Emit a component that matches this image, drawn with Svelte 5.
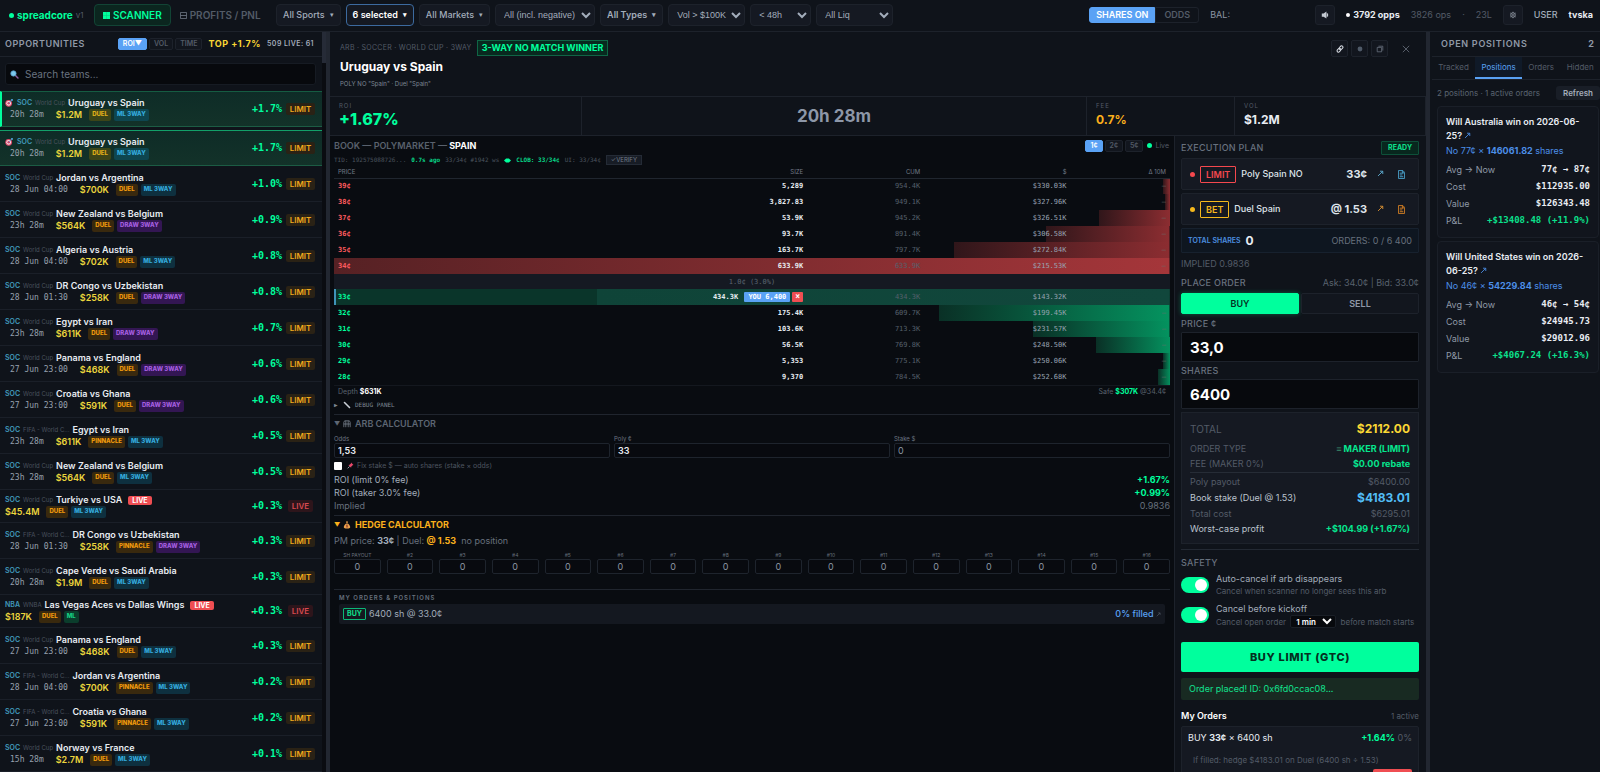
<script lang="ts">
    type Opp = {
        teams: string;
        league?: string;
        sport?: string;
        time?: string;
        vol: string;
        book?: string;
        market?: string;
        roi: string;
        hot?: boolean;
        active?: boolean;
        live?: boolean;
        down?: boolean;
    };

    const opps: Opp[] = [
        { teams: 'Uruguay vs Spain', time: '20h 28m', vol: '$1.2M', roi: '+1.7%', hot: true, active: true },
        { teams: 'Uruguay vs Spain', time: '20h 28m', vol: '$1.2M', roi: '+1.7%', hot: true },
        { teams: 'Jordan vs Argentina', time: '28 Jun 04:00', vol: '$700K', roi: '+1.0%' },
        { teams: 'New Zealand vs Belgium', time: '23h 28m', vol: '$564K', market: 'DRAW 3WAY', roi: '+0.9%' },
        { teams: 'Algeria vs Austria', time: '28 Jun 04:00', vol: '$702K', roi: '+0.8%' },
        { teams: 'DR Congo vs Uzbekistan', time: '28 Jun 01:30', vol: '$258K', market: 'DRAW 3WAY', roi: '+0.8%' },
        { teams: 'Egypt vs Iran', time: '23h 28m', vol: '$611K', market: 'DRAW 3WAY', roi: '+0.7%' },
        { teams: 'Panama vs England', time: '27 Jun 23:00', vol: '$468K', market: 'DRAW 3WAY', roi: '+0.6%' },
        { teams: 'Croatia vs Ghana', time: '27 Jun 23:00', vol: '$591K', market: 'DRAW 3WAY', roi: '+0.6%' },
        { teams: 'Egypt vs Iran', league: 'FIFA - World C...', time: '23h 28m', vol: '$611K', book: 'PINNACLE', roi: '+0.5%' },
        { teams: 'New Zealand vs Belgium', time: '23h 28m', vol: '$564K', roi: '+0.5%' },
        { teams: 'Turkiye vs USA', vol: '$45.4M', roi: '+0.3%', live: true },
        { teams: 'DR Congo vs Uzbekistan', league: 'FIFA - World C...', time: '28 Jun 01:30', vol: '$258K', book: 'PINNACLE', market: 'DRAW 3WAY', roi: '+0.3%' },
        { teams: 'Cape Verde vs Saudi Arabia', time: '20h 28m', vol: '$1.9M', roi: '+0.3%' },
        { teams: 'Las Vegas Aces vs Dallas Wings', sport: 'NBA', league: 'WNBA', vol: '$187K', market: 'ML', roi: '+0.3%', live: true, down: true },
        { teams: 'Panama vs England', time: '27 Jun 23:00', vol: '$468K', roi: '+0.3%' },
        { teams: 'Jordan vs Argentina', league: 'FIFA - World C...', time: '28 Jun 04:00', vol: '$700K', book: 'PINNACLE', roi: '+0.2%' },
        { teams: 'Croatia vs Ghana', league: 'FIFA - World C...', time: '27 Jun 23:00', vol: '$591K', book: 'PINNACLE', roi: '+0.2%' },
        { teams: 'Norway vs France', time: '15h 28m', vol: '$2.7M', roi: '+0.1%' },
    ];

    // size is in shares, the bar width is relative to the largest level
    const asks = [
        { price: 39, size: 5289, label: '5,289', cum: '954.4K', usd: '$330.03K' },
        { price: 38, size: 3827, label: '3,827.83', cum: '949.1K', usd: '$327.96K' },
        { price: 37, size: 53900, label: '53.9K', cum: '945.2K', usd: '$326.51K' },
        { price: 36, size: 93700, label: '93.7K', cum: '891.4K', usd: '$306.58K' },
        { price: 35, size: 163700, label: '163.7K', cum: '797.7K', usd: '$272.84K' },
        { price: 34, size: 633900, label: '633.9K', cum: '633.9K', usd: '$215.53K' },
    ];
    const bids = [
        { price: 33, size: 434300, label: '434.3K', cum: '434.3K', usd: '$143.32K', mine: '6,400' },
        { price: 32, size: 175400, label: '175.4K', cum: '609.7K', usd: '$199.45K' },
        { price: 31, size: 103600, label: '103.6K', cum: '713.3K', usd: '$231.57K' },
        { price: 30, size: 56500, label: '56.5K', cum: '769.8K', usd: '$248.50K' },
        { price: 29, size: 5353, label: '5,353', cum: '775.1K', usd: '$250.06K' },
        { price: 28, size: 9370, label: '9,370', cum: '784.5K', usd: '$252.68K' },
    ];
    const maxSize = Math.max(...asks.map(l => l.size), ...bids.map(l => l.size));
    const depth = (size: number) => (size / maxSize) * 100 + '%';

    const positions = [
        { title: 'Will Australia win on 2026-06-25?', price: '77¢', shares: '146061.82', now: '77¢ → 87¢', cost: '$112935.00', value: '$126343.48', pnl: '+$13408.48 (+11.9%)' },
        { title: 'Will United States win on 2026-06-25?', price: '46¢', shares: '54229.84', now: '46¢ → 54¢', cost: '$24945.73', value: '$29012.96', pnl: '+$4067.24 (+16.3%)' },
    ];

    const hedges = Array.from({ length: 16 }, (_, i) => (i === 0 ? 'SH PAYOUT' : '#' + (i + 1)));

    let sort = $state('ROI');
    let tick = $state('1¢');
    let side = $state('BUY');
    let tab = $state('Positions');
    let autoCancel = $state(true);
    let kickoffCancel = $state(true);
    let price = $state('33,0');
    let shares = $state('6400');
</script>

{#snippet arrow()}
    <svg class="arrow" viewBox="0 0 8 8" aria-hidden="true"><path d="M1.2 6.8 6.4 1.6M3.4 1.4h3.2v3.2" /></svg>
{/snippet}

<div class="app">
    <header class="topbar">
        <a class="brand" href="/"><i class="dot"></i>spreadcore <small>v1</small></a>
        <nav>
            <a class="nav on" href="#scanner">
                <svg viewBox="0 0 8 8"><rect width="8" height="8" fill="#00ff9d" /><path d="M0 4h8M4 0v8" stroke="#0bc97f" stroke-width=".6" /></svg>
                SCANNER
            </a>
            <a class="nav" href="#pnl">
                <svg viewBox="0 0 8 8"><path d="M.5.5h7v7h-7zM.5 4h7" fill="none" stroke="#6b7380" /></svg>
                PROFITS / PNL
            </a>
        </nav>
        <div class="filters">
            <button class="filter">All Sports <span>▾</span></button>
            <button class="filter chosen">6 selected <span>▾</span></button>
            <button class="filter">All Markets <span>▾</span></button>
            <select class="w-l" aria-label="Edge"><option>All (incl. negative)</option></select>
            <button class="filter strong">All Types <span>▾</span></button>
            <select class="w-m" aria-label="Volume"><option>Vol &gt; $100K</option></select>
            <select class="w-s" aria-label="Time"><option>&lt; 48h</option></select>
            <select class="w-m" aria-label="Liquidity"><option>All Liq</option></select>
        </div>
        <div class="account">
            <div class="units"><button class="on">SHARES ON</button><button>ODDS</button></div>
            <span class="bal">BAL:</span>
            <button class="icon" aria-label="Sound">
                <svg viewBox="0 0 10 10"><path d="M1 3.2h2.2L6.8.6v8.8L3.2 7.2H1zM7.3 2.4v5.2l1.6-1V3.4z" fill="#c4cad3" /></svg>
            </button>
            <b><i class="dot white"></i>3792 opps</b>
            <span class="dim">3826 ops</span>
            <span class="dim">·</span>
            <span class="dim">23L</span>
            <button class="icon" aria-label="Settings">
                <svg viewBox="0 0 10 10" fill="none" stroke="#a5adb9"><circle cx="5" cy="5" r="2.8" /><circle cx="5" cy="5" r=".6" /><path d="M5 1v1M5 8v1M1.8 2.6l.8.6M7.4 6.8l.8.6M8.2 2.6l-.8.6M2.6 6.8l-.8.6" /></svg>
            </button>
            <span class="user">USER</span>
            <b>tvska</b>
        </div>
    </header>

    <div class="columns">
        <aside class="opps">
            <div class="scroller">
                <div class="head">
                    <h2>OPPORTUNITIES</h2>
                    <div class="sorts">
                        <button class="chip" class:on={sort === 'ROI'} onclick={() => (sort = 'ROI')}>ROI▼</button>
                        <button class="chip" class:on={sort === 'VOL'} onclick={() => (sort = 'VOL')}>VOL</button>
                        <button class="chip" class:on={sort === 'TIME'} onclick={() => (sort = 'TIME')}>TIME</button>
                    </div>
                    <b class="top">TOP +1.7%</b>
                    <span class="count">509 LIVE: 61</span>
                </div>
                <label class="search">
                    <svg viewBox="0 0 12 12" aria-hidden="true"><path d="m7 7 3.6 3.6" stroke="#8d5fa0" stroke-width="2" stroke-linecap="round" /><circle cx="4.6" cy="4.6" r="3.6" fill="#7cc8ee" stroke="#4d8fb8" /></svg>
                    <input type="search" placeholder="Search teams..." aria-label="Search teams" />
                </label>
                <ul>
                    {#each opps as o}
                        <li class:hot={o.hot} class:active={o.active} class:live={o.live}>
                            <div class="info">
                                <div class="line">
                                    {#if o.hot}
                                        <svg class="target" viewBox="0 0 10 10"><circle cx="4.6" cy="5.4" r="4.2" fill="#e0496a" /><circle cx="4.6" cy="5.4" r="2.9" fill="#f3dfe6" /><circle cx="4.6" cy="5.4" r="1.6" fill="#d93b5f" /><path d="M4.6 5.4 8 2V.4l1.6.2-.2 1.2L8 2" stroke="#56a8e0" fill="#56a8e0" /></svg>
                                    {/if}
                                    <span class="sport">{o.sport ?? 'SOC'}</span>
                                    <span class="league">{o.league ?? 'World Cup'}</span>
                                    <b class="teams">{o.teams}</b>
                                    {#if o.live}<span class="livetag">LIVE</span>{/if}
                                </div>
                                <div class="line meta">
                                    {#if o.time}<span class="time">{o.time}</span>{/if}
                                    <b class="vol">{o.vol}</b>
                                    <span class="tags">
                                        <span class="tag maker">{o.book ?? 'DUEL'}</span>
                                        <span class="tag" class:draw={o.market === 'DRAW 3WAY'} class:ml={o.market === 'ML'}>{o.market ?? 'ML 3WAY'}</span>
                                    </span>
                                </div>
                            </div>
                            <span class="roi">{#if o.down}<i>▾</i>{/if}{o.roi}</span>
                            <span class="kind">{o.live ? 'LIVE' : 'LIMIT'}</span>
                        </li>
                    {/each}
                </ul>
            </div>
            <div class="track"></div>
        </aside>
        <div class="split"></div>

        <main>
            <section class="match">
                <div>
                    <div class="crumbs">ARB · SOCCER · WORLD CUP · 3WAY <span class="winner">3-WAY NO MATCH WINNER</span></div>
                    <h1>Uruguay vs Spain</h1>
                    <p>POLY NO "Spain" · Duel "Spain"</p>
                </div>
                <div class="tools">
                    <button aria-label="Copy link"><svg viewBox="0 0 10 10" fill="none" stroke="#d5dae1" stroke-width="1.3"><rect x="4.6" y=".8" width="3.4" height="5.4" rx="1.7" transform="rotate(40 6.3 3.5)" /><rect x="2" y="3.8" width="3.4" height="5.4" rx="1.7" transform="rotate(40 3.7 6.5)" /></svg></button>
                    <button aria-label="Track"><svg viewBox="0 0 10 10"><circle cx="5" cy="5" r="3" fill="#4f5a68" /></svg></button>
                    <button aria-label="Pop out"><svg viewBox="0 0 10 10" fill="none" stroke="#68717e"><path d="M3 1.5h5.5V7M1.5 3H7v5.5H1.5z" /></svg></button>
                    <button class="close" aria-label="Close"><svg viewBox="0 0 10 10" stroke="#68717e"><path d="m1 1 8 8M9 1 1 9" /></svg></button>
                </div>
            </section>

            <section class="stats">
                <div><small>ROI</small><b class="big">+1.67%</b></div>
                <div class="clock">20h 28m</div>
                <div><small>FEE</small><b class="fee">0.7%</b></div>
                <div><small>VOL</small><b>$1.2M</b></div>
            </section>

            <div class="work">
                <section class="book">
                    <div class="bookhead">
                        <h2>BOOK — POLYMARKET — <b>SPAIN</b></h2>
                        <div class="sorts">
                            {#each ['1¢', '2¢', '5¢'] as t}
                                <button class="chip" class:on={tick === t} onclick={() => (tick = t)}>{t}</button>
                            {/each}
                        </div>
                        <span class="feed"><i class="dot"></i>Live</span>
                    </div>
                    <div class="tid">
                        <span>TID: 192575088726...</span>
                        <b>0.7s ago</b>
                        <span>33/34¢ #1942 ws</span>
                        <svg viewBox="0 0 10 6"><path d="M0 3 3 0h4l3 3-3 3H3z" fill="#00ff9d" /></svg>
                        <b>CLOB: 33/34¢</b>
                        <span>UI: 33/34¢</span>
                        <button>✓VERIFY</button>
                    </div>
                    <table>
                        <thead>
                            <tr><th class="c-price">PRICE</th><th class="c-size">SIZE</th><th class="c-cum">CUM</th><th class="c-usd">$</th><th>Δ 10M</th></tr>
                        </thead>
                        <tbody>
                            {#each asks as l, i}
                                <tr class="ask" class:best={i === asks.length - 1} style:--depth={depth(l.size)}>
                                    <td>{l.price}¢</td><td>{l.label}</td><td>{l.cum}</td><td>{l.usd}</td><td>–</td>
                                </tr>
                            {/each}
                            <tr class="spread"><td colspan="5">1.0¢ (3.0%)</td></tr>
                            {#each bids as l}
                                <tr class="bid" class:own={l.mine} style:--depth={depth(l.size)}>
                                    <td>{l.price}¢</td>
                                    <td>
                                        {l.label}
                                        {#if l.mine}<span class="you">YOU {l.mine}</span><button class="kill" aria-label="Cancel order">×</button>{/if}
                                    </td>
                                    <td>{l.cum}</td><td>{l.usd}</td><td>{l.mine ? '' : '–'}</td>
                                </tr>
                            {/each}
                        </tbody>
                    </table>
                    <div class="depth"><span>Depth <b>$631K</b></span><span>Safe <b class="green">$307K</b> @34.4¢</span></div>
                    <details class="debug">
                        <summary>
                            <svg viewBox="0 0 8 8"><path d="m1.5 1.5 5 5" stroke="#c9ced6" stroke-width="1.6" stroke-linecap="round" /></svg>
                            DEBUG PANEL
                        </summary>
                    </details>

                    <details class="calc" open>
                        <summary>
                            <svg viewBox="0 0 10 10" fill="none" stroke="#77808d"><path d="M1 9V3l1-2h6l1 2v6M1 5h8M3.5 5v4M6.5 5v4M3.5 1v4M6.5 1v4" /></svg>
                            ARB CALCULATOR
                        </summary>
                        <div class="inputs">
                            <label>Odds<input value="1,53" /></label>
                            <label>Poly ¢<input value="33" /></label>
                            <label>Stake $<input placeholder="0" /></label>
                        </div>
                        <label class="fix">
                            <input type="checkbox" />
                            <svg viewBox="0 0 8 8"><path d="m4.6.6 2.8 2.8-1 .3-1.5 1.5-.2 1.4L1.6 3.5 3 3.2l1.5-1.6z" fill="#e8486b" /><path d="M3 5 .8 7.2" stroke="#aab1bc" /></svg>
                            Fix stake $ — auto shares (stake × odds)
                        </label>
                        <dl>
                            <div><dt>ROI (limit 0% fee)</dt><dd>+1.67%</dd></div>
                            <div><dt>ROI (taker 3.0% fee)</dt><dd>+0.99%</dd></div>
                            <div class="muted"><dt>Implied</dt><dd>0.9836</dd></div>
                        </dl>
                    </details>

                    <details class="calc hedge" open>
                        <summary>
                            <svg viewBox="0 0 10 10"><path d="M3.6.6h2.8l-.8 2h-1.2zM4 3h2c1.8 1.2 3 3 3 4.6 0 1.2-1 1.8-2 1.8H3c-1 0-2-.6-2-1.8C1 6 2.2 4.2 4 3z" fill="#e9a04c" /><path d="M5 4.5v3.6M4 5.4h1.6M4.2 7.2h1.8" stroke="#8a3b2c" /></svg>
                            HEDGE CALCULATOR
                        </summary>
                        <p>PM price: <b>33¢</b> | Duel: <b class="amber">@ 1.53</b>&nbsp; no position</p>
                        <div class="payouts">
                            {#each hedges as h}
                                <label>{h}<input placeholder="0" /></label>
                            {/each}
                        </div>
                    </details>

                    <div class="mine">
                        <h3>MY ORDERS &amp; POSITIONS</h3>
                        <div class="order">
                            <span class="buytag">BUY</span> 6400 sh @ 33.0¢
                            <a href="#order">0% filled {@render arrow()}</a>
                        </div>
                    </div>
                </section>

                <section class="exec">
                    <div class="row">
                        <h2>EXECUTION PLAN</h2>
                        <span class="ready">READY</span>
                    </div>
                    <div class="leg red">
                        <i class="dot"></i><span class="type">LIMIT</span>Poly Spain NO
                        <b>33¢</b>
                        <a href="#poly" aria-label="Open market">{@render arrow()}</a>
                        <button aria-label="Copy price"><svg viewBox="0 0 8 10"><path d="M.5.5h5l2 2v7h-7zM2 3.5h4M2 5.5h3M2 7.5h4M5 .5V3h2" /></svg></button>
                    </div>
                    <div class="leg gold">
                        <i class="dot"></i><span class="type">BET</span>Duel Spain
                        <b>@ 1.53</b>
                        <a href="#duel" aria-label="Open book">{@render arrow()}</a>
                        <button aria-label="Copy odds"><svg viewBox="0 0 8 10"><path d="M.5.5h5l2 2v7h-7zM2 3.5h4M2 5.5h3M2 7.5h4M5 .5V3h2" /></svg></button>
                    </div>
                    <div class="shares">
                        <span>TOTAL SHARES</span><b>0</b>
                        <em>ORDERS: 0 / 6 400</em>
                    </div>
                    <p class="implied">IMPLIED 0.9836</p>
                    <div class="row place">
                        <h2>PLACE ORDER</h2>
                        <span>Ask: 34.0¢ | Bid: 33.0¢</span>
                    </div>
                    <div class="sides">
                        <button class:on={side === 'BUY'} onclick={() => (side = 'BUY')}>BUY</button>
                        <button class:on={side === 'SELL'} onclick={() => (side = 'SELL')}>SELL</button>
                    </div>
                    <label class="field">PRICE ¢<input bind:value={price} /></label>
                    <label class="field">SHARES<input bind:value={shares} /></label>

                    <dl class="summary">
                        <div class="total"><dt>TOTAL</dt><dd>$2112.00</dd></div>
                        <div class="good"><dt>ORDER TYPE</dt><dd><i>≡</i> MAKER (LIMIT)</dd></div>
                        <div class="good"><dt>FEE (MAKER 0%)</dt><dd>$0.00 rebate</dd></div>
                        <hr />
                        <div><dt>Poly payout</dt><dd>$6400.00</dd></div>
                        <div class="stake"><dt>Book stake (Duel @ 1.53)</dt><dd>$4183.01</dd></div>
                        <div><dt>Total cost</dt><dd>$6295.01</dd></div>
                        <div class="good lit"><dt>Worst-case profit</dt><dd>+$104.99 (+1.67%)</dd></div>
                    </dl>

                    <div class="safety">
                        <h2>SAFETY</h2>
                        <div class="option">
                            <input id="auto" type="checkbox" bind:checked={autoCancel} />
                            <label for="auto">Auto-cancel if arb disappears<small>Cancel when scanner no longer sees this arb</small></label>
                        </div>
                        <div class="option">
                            <input id="kickoff" type="checkbox" bind:checked={kickoffCancel} />
                            <div>
                                <label for="kickoff">Cancel before kickoff</label>
                                <small>Cancel open order <select aria-label="Minutes before kickoff"><option>1 min</option></select> before match starts</small>
                            </div>
                        </div>
                    </div>
                    <button class="submit">BUY LIMIT (GTC)</button>
                    <div class="placed">Order placed! ID: 0x6fd0ccac08...</div>
                    <div class="row orders"><b>My Orders</b><span>1 active</span></div>
                    <div class="open">
                        <div class="row"><span>BUY <b>33¢</b> × 6400 sh</span><span><b class="green">+1.64%</b> <i>0%</i></span></div>
                        <p>If filled: hedge $4183.01 on Duel (6400 sh ÷ 1.53)</p>
                        <button aria-label="Cancel order"></button>
                    </div>
                </section>
            </div>
        </main>
        <div class="split"></div>

        <aside class="positions">
            <div class="head"><h2>OPEN POSITIONS</h2><b>2</b></div>
            <div class="tabs">
                {#each ['Tracked', 'Positions', 'Orders', 'Hidden'] as t}
                    <button class:on={tab === t} onclick={() => (tab = t)}>{t}</button>
                {/each}
            </div>
            <div class="status"><span>2 positions · 1 active orders</span><button>Refresh</button></div>
            {#each positions as p}
                <article>
                    <h3>{p.title} <a href="#market" aria-label="Open market">{@render arrow()}</a></h3>
                    <p>No {p.price} × <b>{p.shares}</b> shares</p>
                    <dl>
                        <div><dt>Avg → Now</dt><dd>{p.now}</dd></div>
                        <div><dt>Cost</dt><dd>{p.cost}</dd></div>
                        <div><dt>Value</dt><dd>{p.value}</dd></div>
                        <div><dt>P&amp;L</dt><dd class="green">{p.pnl}</dd></div>
                    </dl>
                </article>
            {/each}
        </aside>
    </div>
</div>

<style>
    :global(body) {
        background: #090c11;
    }

    .app {
        --panel: #0f131a;
        --card: #151922;
        --line: #1d222b;
        --dim: #535b67;
        --text: #e8ecf2;
        --soft: #a3adbb;
        --green: #00ff9d;
        --blue: #5aa2f5;
        --yellow: #fbd834;
        --mono: "DejaVu Sans Mono", "Liberation Mono", monospace;
        display: flex;
        flex-direction: column;
        height: 100vh;
        overflow: hidden;
        font: 9px/12px Inter, "Liberation Sans", sans-serif;
        color: var(--text);
        background: #090c11;
    }

    .app * {
        box-sizing: border-box;
    }

    h1, h2, h3, p, ul, dl, dd {
        margin: 0;
        padding: 0;
    }

    button, input, select {
        font: inherit;
        color: inherit;
        margin: 0;
    }

    button {
        padding: 0;
        border: 0;
        background: none;
        cursor: pointer;
    }

    a {
        color: inherit;
        text-decoration: none;
    }

    i, em {
        font-style: normal;
    }

    .dot {
        display: inline-block;
        width: 5px;
        height: 5px;
        border-radius: 50%;
        background: var(--green);
    }

    .green {
        color: var(--green);
    }

    .arrow {
        width: 7px;
        height: 7px;
        fill: none;
        stroke: currentColor;
    }

    /* top bar */
    .topbar {
        display: flex;
        align-items: center;
        height: 32px;
        flex: none;
        padding: 0 7px 1px 9px;
        background: var(--panel);
        border-bottom: 1px solid var(--line);
        white-space: nowrap;
    }

    .brand {
        display: flex;
        align-items: center;
        gap: 3px;
        width: 85px;
        font-size: 10px;
        font-weight: 700;
        color: var(--green);
    }

    .brand small {
        font-size: 8px;
        font-weight: 400;
        color: var(--dim);
    }

    nav {
        display: flex;
        width: 182px;
    }

    .nav {
        display: flex;
        align-items: center;
        gap: 3px;
        height: 22px;
        padding: 0 8px;
        border: 1px solid transparent;
        border-radius: 4px;
        font-size: 10px;
        font-weight: 600;
        color: var(--dim);
    }

    .nav svg {
        flex: none;
        width: 7px;
        height: 7px;
    }

    .nav.on {
        color: var(--green);
        background: #0b261f;
        border-color: #124435;
    }

    .filters {
        display: flex;
        gap: 5px;
    }

    .filter, .filters select {
        display: flex;
        align-items: center;
        height: 22px;
        padding: 0 6px;
        font-size: 9px;
        font-weight: 500;
        color: var(--soft);
        background: var(--card);
        border: 1px solid var(--line);
        border-radius: 4px;
    }

    .filters select {
        padding: 0 0 0 4px;
        font-family: "Liberation Sans", Arial, sans-serif;
        font-weight: 400;
    }

    .filter span {
        margin-left: 5px;
        font-size: 7px;
    }

    .filter.chosen {
        font-weight: 600;
        color: #fff;
        border-color: #3c6a9f;
    }

    .filter.strong {
        font-weight: 600;
    }

    .filters .w-l { width: 100px; }
    .filters .w-m { width: 77px; }
    .filters .w-s { width: 61px; }

    .account {
        display: flex;
        align-items: center;
        gap: 11px;
        margin-left: auto;
    }

    .units {
        display: flex;
    }

    .units button {
        height: 16px;
        padding: 0 8px;
        font-weight: 600;
        color: var(--dim);
        border: 1px solid var(--line);
        border-radius: 0 3px 3px 0;
    }

    .units .on {
        padding: 0 6px;
        color: #fff;
        background: var(--blue);
        border-color: var(--blue);
        border-radius: 3px 0 0 3px;
    }

    .bal {
        width: 94px;
        color: #8b95a3;
    }

    .icon {
        display: grid;
        place-items: center;
        width: 20px;
        height: 20px;
        background: var(--card);
        border: 1px solid var(--line);
        border-radius: 3px;
    }

    .icon svg {
        width: 8px;
        height: 8px;
    }

    .dim {
        color: var(--dim);
    }

    .dot.white {
        width: 4px;
        height: 4px;
        margin-right: 3px;
        vertical-align: 1px;
        background: #fff;
    }

    .user {
        font-weight: 500;
        color: var(--soft);
    }

    /* frame */
    .columns {
        display: flex;
        flex: 1;
        min-height: 0;
    }

    .split {
        flex: none;
        width: 4px;
        background: #222731;
    }

    .opps {
        display: flex;
        flex: none;
        width: 326px;
        overflow: hidden;
        background: #0a0c11;
    }

    .scroller {
        flex: 1;
        min-width: 0;
        background: var(--panel);
    }

    .track {
        width: 4px;
    }

    .track::before {
        content: "";
        display: block;
        height: 31px;
        background: #262b37;
    }

    h2 {
        font-size: 9px;
        font-weight: 600;
        letter-spacing: 0.06em;
        color: #8f99a7;
    }

    .head {
        display: flex;
        align-items: center;
        height: 25px;
        padding: 0 8px 0 5px;
        border-bottom: 1px solid var(--line);
    }

    .sorts {
        display: flex;
        gap: 2px;
        margin-left: auto;
    }

    .chip {
        height: 12px;
        padding: 0 4px;
        font-size: 7px;
        font-weight: 600;
        line-height: 10px;
        color: var(--dim);
        background: #12161e;
        border: 1px solid var(--line);
        border-radius: 2px;
    }

    .chip.on {
        color: #fff;
        background: var(--blue);
        border-color: var(--blue);
    }

    .top {
        margin: 0 6px;
        letter-spacing: 0.06em;
        color: var(--yellow);
    }

    .count {
        font-size: 7px;
        font-weight: 600;
        letter-spacing: 0.06em;
        color: var(--soft);
    }

    .search {
        display: flex;
        align-items: center;
        gap: 6px;
        height: 22px;
        margin: 6px 6px 6px 5px;
        padding: 0 4px;
        background: #07090d;
        border: 1px solid #161b23;
        border-radius: 3px;
    }

    .search svg {
        width: 9px;
        height: 9px;
    }

    .search input {
        flex: 1;
        padding: 0;
        border: 0;
        outline: 0;
        background: none;
        font-size: 10px;
    }

    .search input::placeholder {
        color: #6a7380;
        opacity: 1;
    }

    ul {
        list-style: none;
    }

    li {
        display: flex;
        align-items: center;
        height: 36px;
        padding: 0 7px 0 5px;
        border-bottom: 1px solid #1a1f28;
    }

    li.live {
        height: 33px;
    }

    li.hot {
        margin-bottom: 3px;
        background: linear-gradient(#0e2c27, #133229);
        border-top: 1px solid #155c42;
        border-bottom: 1px solid #1c5c44;
    }

    li.hot + .hot {
        margin-bottom: 0;
        border-top-color: #12a069;
    }

    li.active {
        padding-left: 3px;
        border-left: 2px solid var(--green);
    }

    .info {
        flex: 1;
        min-width: 0;
    }

    .line {
        display: flex;
        align-items: center;
        height: 12px;
        gap: 3px;
        white-space: nowrap;
    }

    .target {
        width: 8px;
        height: 8px;
        margin-right: 1px;
    }

    .sport {
        font-size: 7px;
        font-weight: 600;
        color: #4199bb;
    }

    .league {
        font-size: 6px;
        color: #4a525e;
    }

    .teams {
        font-weight: 600;
    }

    .livetag {
        margin-left: 3px;
        padding: 0 4px;
        border-radius: 2px;
        font-size: 7px;
        font-weight: 700;
        line-height: 9px;
        color: #fff;
        background: #ef4e52;
    }

    .meta {
        gap: 7px;
    }

    .time {
        margin-left: 5px;
        margin-right: 5px;
        font: 8px/12px var(--mono);
        color: #97a1ae;
    }

    .vol {
        font-weight: 600;
        color: #ecd53d;
    }

    .tags {
        display: flex;
        gap: 3px;
    }

    .tag {
        height: 12px;
        padding: 0 3px;
        border-radius: 2px;
        font-size: 6px;
        font-weight: 800;
        line-height: 9px;
        color: #35abdd;
        background: #0e303f;
    }

    .tag.maker {
        color: #f09a0c;
        background: #39290e;
    }

    .tag.draw {
        color: #a55fe0;
        background: #331653;
    }

    .tag.ml {
        color: #16cd82;
        background: #0b3d2c;
    }

    .hot .tag {
        background: #0e4650;
    }

    .hot .tag.maker {
        color: #e0b019;
        background: #3c4518;
    }

    .roi {
        margin-right: 4px;
        font: bold 10px/12px var(--mono);
        color: var(--green);
    }

    .roi i {
        margin-right: -2px;
        font-size: 6px;
        color: #ef4e52;
    }

    .kind {
        width: 29px;
        border-radius: 2px;
        font-size: 8px;
        font-weight: 600;
        text-align: center;
        color: #f0a91c;
        background: #2a2215;
    }

    .live .kind {
        width: 25px;
        margin: 0 2px;
        color: #d94a50;
        background: #2d151b;
    }

    /* match header */
    main {
        display: flex;
        flex: 1;
        flex-direction: column;
        min-width: 0;
    }

    .match {
        display: flex;
        justify-content: space-between;
        height: 65px;
        flex: none;
        padding: 8px 12px 0 10px;
        background: var(--panel);
        border-bottom: 1px solid var(--line);
    }

    .crumbs {
        display: flex;
        align-items: center;
        gap: 5px;
        font-size: 7px;
        letter-spacing: 0.04em;
        color: var(--dim);
    }

    .winner {
        padding: 1px 4px;
        border: 1px solid #0f6545;
        font-size: 9px;
        font-weight: 700;
        letter-spacing: 0;
        color: var(--green);
        background: #08291f;
    }

    h1 {
        margin-top: 3px;
        font-size: 12px;
        font-weight: 700;
        line-height: 16px;
        color: #fff;
    }

    .match p {
        margin-top: 3px;
        font-size: 6px;
        color: #7d8794;
    }

    .tools {
        display: flex;
        gap: 3px;
    }

    .tools button {
        display: grid;
        place-items: center;
        width: 17px;
        height: 17px;
        background: #12161e;
        border: 1px solid var(--line);
        border-radius: 2px;
    }

    .tools svg {
        width: 8px;
        height: 8px;
    }

    .tools .close {
        margin-left: 6px;
        background: none;
        border: 0;
    }

    .stats {
        display: grid;
        grid-template-columns: 252fr 505fr 148fr 191fr;
        height: 39px;
        flex: none;
        background: var(--panel);
        border-bottom: 1px solid var(--line);
    }

    .stats div {
        display: flex;
        flex-direction: column;
        padding: 4px 9px;
        border-right: 1px solid var(--line);
        font-size: 12px;
    }

    .stats small {
        font-size: 6px;
        line-height: 10px;
        letter-spacing: 1px;
        color: var(--dim);
    }

    .stats b {
        line-height: 17px;
    }

    .stats .big {
        font-size: 16px;
        font-weight: 800;
        color: var(--green);
    }

    .stats .clock {
        align-items: center;
        justify-content: center;
        font-size: 17px;
        font-weight: 700;
        color: #8d97a8;
    }

    .fee {
        color: #fbb01c;
    }

    .work {
        display: flex;
        flex: 1;
        min-height: 0;
    }

    /* order book */
    .book {
        flex: 1;
        min-width: 0;
        padding: 3px 4px;
    }

    .bookhead {
        display: flex;
        align-items: center;
        height: 14px;
    }

    .bookhead h2 {
        letter-spacing: 0;
        color: #59616d;
    }

    .bookhead h2 b {
        font-weight: 700;
        color: #fff;
    }

    .feed {
        margin: 0 1px 0 4px;
        font-size: 7px;
        color: var(--dim);
    }

    .feed .dot {
        margin-right: 3px;
    }

    .tid {
        display: flex;
        align-items: center;
        gap: 5px;
        height: 14px;
        font: 6px/10px var(--mono);
        color: #4c545f;
    }

    .tid b {
        color: #08d688;
    }

    .tid svg {
        width: 7px;
        height: 5px;
    }

    .tid button {
        height: 10px;
        padding: 0 4px;
        font: 6px/8px Inter, sans-serif;
        color: #747e8b;
        background: #171c25;
        border: 1px solid #242b36;
    }

    table {
        width: 100%;
        table-layout: fixed;
        border-collapse: collapse;
        font: 7px/14px var(--mono);
    }

    th {
        height: 11px;
        padding: 0 4px;
        border-bottom: 1px solid #20262f;
        font: 6px/10px Inter, sans-serif;
        letter-spacing: 0;
        text-align: right;
        color: #727b88;
    }

    th:first-child, td:first-child {
        text-align: left;
    }

    .c-price { width: 20%; }
    .c-size { width: 36.6%; }
    .c-cum { width: 14%; }
    .c-usd { width: 17.5%; }

    td {
        height: 16px;
        padding: 0 4px;
        text-align: right;
        white-space: nowrap;
    }

    .ask, .bid {
        background: linear-gradient(90deg, var(--from), var(--to)) right / var(--depth) 100% no-repeat;
    }

    .ask {
        --from: #30161a;
        --to: #8c2d31;
    }

    .ask.best {
        --from: #562124;
        --to: #a5363a;
    }

    .bid {
        --from: #0a3026;
        --to: #04935f;
    }

    .bid.own {
        --from: #0f4438;
        --to: #11473c;
        background-color: #0a352a;
        box-shadow: inset 2px 0 #3f93b8;
    }

    td:nth-child(1), td:nth-child(2) {
        font-weight: bold;
    }

    .ask td:first-child {
        color: #ff5b5e;
    }

    .bid td:first-child {
        color: var(--green);
    }

    td:nth-child(3) {
        color: #56606c;
    }

    td:nth-child(4) {
        color: #98a3b1;
    }

    td:nth-child(5) {
        color: #6a6f6c;
    }

    .spread td {
        height: 15px;
        font-weight: normal;
        text-align: center;
        color: #5b6470;
        background: #151922;
    }

    .spread td:first-child {
        text-align: center;
    }

    .you, .kill {
        display: inline-block;
        height: 10px;
        margin-left: 2px;
        padding: 0 4px;
        border-radius: 1px;
        font: bold 7px/10px var(--mono);
        vertical-align: middle;
        color: #fff;
        background: var(--blue);
    }

    .kill {
        padding: 0 3px;
        font-size: 8px;
        background: #ef4e52;
    }

    .depth {
        display: flex;
        justify-content: space-between;
        padding: 0 4px;
        border-top: 1px solid #14181f;
        font-size: 7px;
        color: #59626e;
    }

    .depth b:not(.green) {
        color: #fff;
    }

    summary {
        display: flex;
        align-items: center;
        gap: 4px;
        list-style: none;
        cursor: pointer;
    }

    summary::before {
        content: "▶";
        width: 5px;
        font-size: 6px;
    }

    details[open] summary::before {
        content: "▼";
    }

    summary svg {
        width: 8px;
        height: 8px;
    }

    .debug {
        height: 16px;
        font: 6px/14px var(--mono);
        color: #7d8693;
    }

    .calc {
        padding-top: 3px;
        border-top: 1px solid #20252e;
    }

    .calc summary {
        gap: 4px;
        font-weight: 600;
        color: #5d6673;
    }

    .inputs {
        display: grid;
        grid-template-columns: repeat(3, 1fr);
        gap: 4px;
        margin-top: 5px;
    }

    .inputs label {
        font-size: 6px;
        line-height: 8px;
        color: #6c7582;
    }

    .calc .inputs input, .payouts input {
        display: block;
        width: 100%;
        height: 15px;
        padding: 0 3px;
        border: 1px solid #1e242d;
        border-radius: 2px;
        font-size: 9px;
        font-weight: 600;
        color: var(--text);
        background: #080a0f;
    }

    .calc input::placeholder {
        font-weight: 400;
        color: #8d96a3;
        opacity: 1;
    }

    .fix {
        display: flex;
        align-items: center;
        gap: 5px;
        height: 15px;
        font-size: 7px;
        color: #4d5560;
    }

    .fix input {
        appearance: none;
        width: 8px;
        height: 8px;
        background: #fff;
        border-radius: 1px;
    }

    .fix input:checked {
        background: var(--blue);
    }

    .fix svg {
        width: 7px;
        height: 7px;
        margin-right: -2px;
    }

    dl div {
        display: flex;
        justify-content: space-between;
    }

    .calc dl {
        margin-bottom: 3px;
        line-height: 13px;
        color: var(--soft);
    }

    .calc dd {
        font-weight: 700;
        color: var(--green);
    }

    .calc .muted, .calc .muted dd {
        font-weight: 400;
        color: #67707d;
    }

    .hedge summary {
        font-weight: 700;
        color: #fbb01c;
    }

    .hedge p {
        margin-top: 4px;
        color: #67707d;
    }

    .hedge p b {
        color: var(--soft);
    }

    .hedge p .amber {
        color: #fbb01c;
    }

    .payouts {
        display: grid;
        grid-template-columns: repeat(16, 1fr);
        gap: 6px;
        margin-top: 4px;
    }

    .payouts label {
        font-size: 5px;
        line-height: 8px;
        text-align: center;
        color: #67707d;
    }

    .payouts input {
        text-align: center;
    }

    .mine {
        margin-top: 15px;
        padding: 2px 5px;
        border-top: 1px solid #20252e;
    }

    .mine h3 {
        font-size: 6px;
        font-weight: 600;
        letter-spacing: 1px;
        color: #67707d;
    }

    .order {
        display: flex;
        align-items: center;
        gap: 3px;
        height: 20px;
        padding: 0 4px;
        border-radius: 2px;
        color: var(--soft);
        background: #141820;
    }

    .order a {
        margin-left: auto;
        font-weight: 500;
        color: var(--blue);
    }

    .order .arrow {
        width: 5px;
        height: 5px;
        stroke: var(--dim);
    }

    .buytag {
        padding: 0 3px;
        border: 1px solid #0bb777;
        border-radius: 1px;
        font-size: 7px;
        font-weight: 700;
        line-height: 10px;
        color: #0de08e;
    }

    /* execution panel */
    .exec {
        flex: none;
        width: 252px;
        padding: 5px 7px 0 6px;
        overflow: hidden;
        background: var(--panel);
        border-left: 1px solid var(--line);
    }

    .row {
        display: flex;
        align-items: center;
        justify-content: space-between;
    }

    .exec h2 {
        font-weight: 500;
        letter-spacing: 0.03em;
        color: #68717e;
    }

    .ready {
        padding: 0 6px;
        border: 1px solid #0d5039;
        border-radius: 1px;
        font-size: 7px;
        font-weight: 700;
        color: #0de08e;
        background: #08271e;
    }

    .leg {
        display: flex;
        align-items: center;
        height: 32px;
        margin-top: 3px;
        padding: 0 13px 0 8px;
        border: 1px solid var(--line);
        border-radius: 2px;
        font-weight: 500;
        color: #dfe4ea;
        background: var(--card);
    }

    .leg .dot, .leg .type {
        margin-right: 5px;
        background: var(--tone);
    }

    .leg.red {
        --tone: #f5484e;
    }

    .leg.gold {
        --tone: #f5b81c;
    }

    .leg .type {
        padding: 1px 5px;
        border: 1px solid var(--tone);
        border-radius: 1px;
        font-weight: 600;
        line-height: 13px;
        color: var(--tone);
        background: none;
    }

    .leg b {
        margin-left: auto;
        font-size: 11px;
    }

    .leg a {
        margin: 0 14px 0 10px;
        line-height: 8px;
        color: #62b5dc;
    }

    .leg button svg {
        display: block;
        width: 7px;
        height: 9px;
        fill: none;
        stroke: #4da8d4;
    }

    .leg.gold a {
        color: #e89a35;
    }

    .leg.gold button svg {
        stroke: #dc8424;
    }

    .shares {
        display: flex;
        align-items: center;
        height: 25px;
        margin-top: 3px;
        padding: 0 6px;
        border: 1px solid #17212e;
        border-radius: 1px;
        background: #0e1620;
    }

    .shares span {
        font-size: 7px;
        font-weight: 600;
        color: #4c8fe0;
    }

    .shares b {
        margin-left: 5px;
        font-size: 12px;
    }

    .shares em {
        margin-left: auto;
        color: #67707d;
    }

    .implied {
        margin: 5px 0 7px;
        color: var(--dim);
    }

    .place span {
        color: #59626e;
    }

    .sides {
        display: grid;
        grid-template-columns: 1fr 1fr;
        gap: 2px;
        margin: 4px 0;
    }

    .sides button {
        height: 21px;
        border: 1px solid var(--line);
        border-radius: 2px;
        font-weight: 600;
        color: #9099a8;
        background: #12161e;
    }

    .sides .on {
        color: #04301f;
        background: var(--green);
        border-color: var(--green);
        box-shadow: 0 0 5px #00ff9d50;
    }

    .field {
        display: block;
        margin-bottom: 3px;
        font-weight: 500;
        letter-spacing: 0.03em;
        color: #68717e;
    }

    .field input {
        display: block;
        width: 100%;
        height: 30px;
        margin-top: 2px;
        padding: 0 8px;
        border: 1px solid var(--line);
        border-radius: 1px;
        outline: 0;
        font-size: 15px;
        font-weight: 700;
        letter-spacing: 0;
        color: #fff;
        background: #07090d;
    }

    .summary {
        padding: 6px 8px 7px;
        border: 1px solid var(--line);
        background: var(--card);
        line-height: 15px;
        color: var(--dim);
    }

    .summary .total {
        font-size: 10px;
        line-height: 20px;
        padding-bottom: 2px;
    }

    .summary .total dd {
        font-size: 12px;
        font-weight: 700;
        color: var(--yellow);
    }

    .summary .good dd {
        font-weight: 700;
        color: #06e68f;
    }

    .summary .good i {
        font-weight: 400;
        color: #3c8b6b;
    }

    .summary hr {
        margin: 1px 0;
        border: 0;
        border-top: 1px solid #262c36;
    }

    .summary .stake, .summary .lit {
        color: #bcc4cf;
    }

    .summary .stake {
        line-height: 17px;
    }

    .summary .stake dd {
        font-size: 12px;
        font-weight: 700;
        color: #52bdf5;
    }

    .safety {
        margin-top: 5px;
        padding-top: 7px;
        border-top: 1px solid #232933;
    }

    .option {
        display: flex;
        align-items: center;
        gap: 7px;
        height: 24px;
        margin-top: 4px;
        color: var(--soft);
        white-space: nowrap;
    }

    .option input {
        appearance: none;
        flex: none;
        width: 28px;
        height: 16px;
        padding: 2px;
        border-radius: 8px;
        background: #2a303b;
    }

    .option input::before {
        content: "";
        display: block;
        width: 12px;
        height: 12px;
        border-radius: 50%;
        background: #fff;
    }

    .option input:checked {
        background: var(--green);
    }

    .option input:checked::before {
        margin-left: auto;
    }

    .option small {
        display: block;
        font-size: 8px;
        color: var(--dim);
    }

    .option + .option {
        margin-top: 6px;
    }

    .option select {
        width: 46px;
        height: 13px;
        margin: 0 2px;
        padding: 0 1px;
        border: 1px solid #1a1f27;
        border-radius: 2px;
        font-size: 8px;
        font-weight: 600;
        color: #fff;
        background: #07090d;
    }

    .submit {
        display: block;
        width: 100%;
        height: 30px;
        margin: 15px 0 6px;
        border-radius: 2px;
        font-size: 11px;
        font-weight: 800;
        letter-spacing: 0.06em;
        color: #04301f;
        background: var(--green);
    }

    .placed {
        height: 22px;
        padding: 0 8px;
        border-radius: 2px;
        line-height: 22px;
        color: #12e28f;
        background: #182a22;
    }

    .orders {
        margin: 10px 0 4px;
    }

    .orders b {
        font-weight: 600;
        color: #fff;
    }

    .orders span {
        font-size: 8px;
        color: var(--dim);
    }

    .open {
        padding: 5px 6px;
        border: 1px solid var(--line);
        border-radius: 2px;
        background: var(--card);
    }

    .open i {
        color: var(--dim);
    }

    .open p {
        margin: 10px 5px 3px;
        font-size: 8px;
        white-space: nowrap;
        color: var(--dim);
    }

    .open button {
        display: block;
        width: 39px;
        height: 16px;
        margin-left: auto;
        border-radius: 2px;
        background: #ef4e52;
    }

    /* positions */
    .positions {
        flex: none;
        width: 170px;
        padding-left: 2px;
        overflow: hidden;
        background: var(--panel);
    }

    .positions .head {
        justify-content: space-between;
        padding: 0 6px 0 9px;
        color: #8f99a7;
    }

    .positions h2 {
        letter-spacing: 0.08em;
    }

    .tabs {
        display: flex;
        height: 23px;
        border-bottom: 1px solid var(--line);
    }

    .tabs button {
        flex: 1 1 auto;
        padding: 0 4px;
        font-size: 8px;
        border-bottom: 2px solid transparent;
        color: var(--dim);
    }

    .tabs .on {
        color: var(--blue);
        background: #101a28;
        border-bottom-color: var(--blue);
    }

    .status {
        display: flex;
        align-items: center;
        justify-content: space-between;
        height: 26px;
        padding-left: 5px;
        font-size: 8px;
        white-space: nowrap;
        color: #5a6370;
    }

    .status button {
        height: 14px;
        padding: 0 7px;
        border-radius: 3px;
        font-size: 8px;
        font-weight: 600;
        color: var(--soft);
        background: #191e27;
    }

    article {
        height: 132px;
        margin: 0 1px 3px 5px;
        padding: 8px 8px 0;
        border: 1px solid #1a1f28;
        border-radius: 4px;
        background: #11151d;
    }

    article h3 {
        font-size: 9px;
        font-weight: 600;
        line-height: 14px;
    }

    article h3 a, article p {
        color: #4c8fe8;
    }

    article p {
        margin: 2px 0 4px;
    }

    article dl {
        line-height: 17px;
        color: #8f99a7;
    }

    article dd {
        font: bold 9px/17px var(--mono);
        color: var(--text);
    }

    article dd.green {
        color: #0be08c;
    }
</style>
